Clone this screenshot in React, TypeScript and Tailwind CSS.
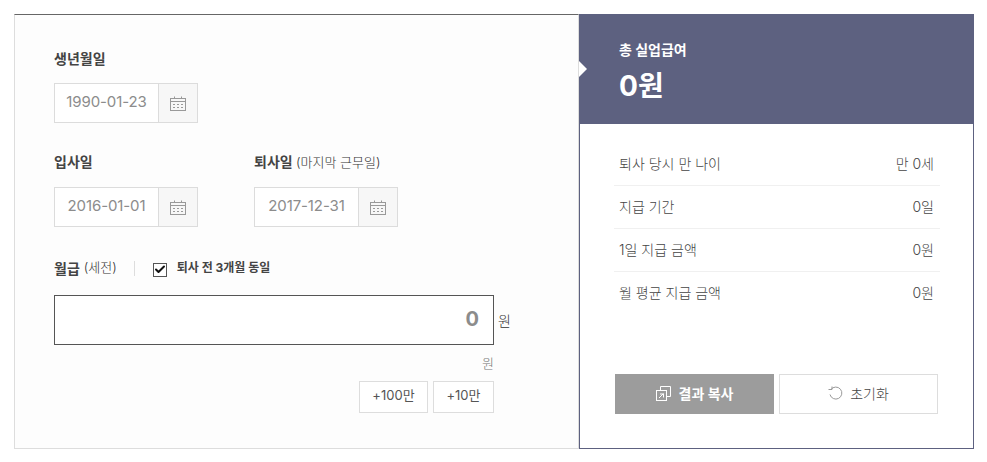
import { Check } from 'lucide-react';

const fontStack = { fontFamily: 'Inter, "Noto Sans CJK KR", "Noto Sans", sans-serif' };

function CalendarIcon() {
  return (
    <svg width="16" height="15" viewBox="0 0 16 15" fill="none" stroke="#999999" strokeWidth="1">
      <rect x="0.5" y="2.5" width="15" height="12" />
      <path d="M0.5 5.5H15.5M4.5 0.5V2.5M11.5 0.5V2.5" />
      <path d="M3 8.5H5M7 8.5H9M11 8.5H13M3 11.5H5M7 11.5H9M11 11.5H13" />
    </svg>
  );
}

function DateField({ value }: { value: string }) {
  return (
    <div className="flex h-10 w-[144px] border border-[#dcdcdc] bg-white">
      <div className="flex flex-1 items-center justify-center pb-[2px] text-[15px] tracking-[-0.1px] text-[#8c8c8c]">{value}</div>
      <div className="flex w-[39px] items-center justify-center border-l border-[#dcdcdc] bg-[#f7f7f7]">
        <CalendarIcon />
      </div>
    </div>
  );
}

function ResultRow({ label, value, last }: { label: string; value: string; last?: boolean }) {
  return (
    <div className={`flex h-[43px] items-center justify-between pb-[2px] pl-[5px] pr-[6px] text-[14px] font-light text-[#444] ${last ? '' : 'border-b border-[#f0f0f0]'}`}>
      <span>{label}</span>
      <span>{value}</span>
    </div>
  );
}

export default function App() {
  return (
    <div className="h-[462px] w-[987px] bg-white p-[14px] pr-[13px]" style={fontStack}>
      <div className="flex h-[435px] w-[960px]">
        {/* Input side */}
        <div className="flex w-[565px] flex-col border-x border-b border-t border-[#dddddd] border-t-[#666] bg-[#fdfdfd] pl-[39px] pt-[33px]">
          <div className="mb-[13px] text-[14px] leading-[22px] font-bold text-[#444]">생년월일</div>
          <DateField value="1990-01-23" />

          <div className="mt-[28px] flex gap-[56px]">
            <div>
              <div className="mb-[14px] text-[14px] leading-[22px] font-bold text-[#444]">입사일</div>
              <DateField value="2016-01-01" />
            </div>
            <div>
              <div className="mb-[14px] text-[14px] leading-[22px] font-bold text-[#444]">
                퇴사일 <span className="text-[13px] font-light text-[#333]">(마지막 근무일)</span>
              </div>
              <DateField value="2017-12-31" />
            </div>
          </div>

          <div className="mt-[30px] flex h-[22px] items-center">
            <span className="text-[14px] font-bold text-[#444]">월급</span>
            <span className="ml-1 text-[13px] font-light text-[#333]">(세전)</span>
            <div className="ml-[17px] h-[15px] w-px bg-[#dddddd]" />
            <div className="ml-[18px] mt-[3px] flex h-[14px] w-[14px] items-center justify-center border border-[#555] bg-white">
              <Check size={13} strokeWidth={4} className="text-[#111]" />
            </div>
            <span className="ml-[10px] text-[12px] font-bold text-[#444]">퇴사 전 3개월 동일</span>
          </div>

          <div className="mt-[16px] flex items-center">
            <div className="flex h-[50px] w-[440px] items-center justify-end border border-[#555] bg-white pb-[2px] pr-[14px] text-[20px] font-bold text-[#8c8c8c]">0</div>
            <span className="ml-[4px] text-[14px] font-light text-[#333]">원</span>
          </div>

          <div className="mt-[8px] w-[440px] text-right text-[13px] leading-[20px] font-light text-[#777]">원</div>

          <div className="mt-[8px] flex w-[440px] justify-end gap-[5px]">
            <button className="h-[32px] w-[69px] border border-[#dddddd] bg-white pb-[2px] text-[13px] text-[#555]">+100만</button>
            <button className="h-[32px] w-[61px] border border-[#dddddd] bg-white pb-[2px] text-[13px] text-[#555]">+10만</button>
          </div>
        </div>

        {/* Result side */}
        <div className="flex w-[395px] flex-col border-x border-b border-[#5d6180] bg-white">
          <div className="relative -mx-px h-[110px] bg-[#5d6180] pl-[40px] pt-[25px] text-white">
            <div className="absolute left-0 top-[47px] h-0 w-0 border-y-[8px] border-l-[8px] border-y-transparent border-l-white" />
            <div className="text-[14px] leading-[22px] font-bold">총 실업급여</div>
            <div className="mt-[6px] text-[28px] leading-[38px] font-bold">0원</div>
          </div>

          <div className="ml-[34px] mr-[33px] mt-[19px]">
            <ResultRow label="퇴사 당시 만 나이" value="만 0세" />
            <ResultRow label="지급 기간" value="0일" />
            <ResultRow label="1일 지급 금액" value="0원" />
            <ResultRow label="월 평균 지급 금액" value="0원" last />
          </div>

          <div className="mt-[59px] flex gap-[5px] pl-[35px]">
            <button className="flex h-[40px] w-[159px] items-center justify-center gap-[8px] bg-[#9c9c9c] pb-[2px] text-[14px] font-bold text-white">
              <svg width="15" height="15" viewBox="0 0 15 15" fill="none" stroke="#ffffff" strokeWidth="1">
                <path d="M4.5 4V0.5H14.5V10.5H11" />
                <rect x="0.5" y="4.5" width="10" height="10" />
                <path d="M3 12L7.5 7.5M4 8H7.5V11.5" />
              </svg>
              결과 복사
            </button>
            <button className="flex h-[40px] w-[159px] items-center justify-center gap-[7px] border border-[#dddddd] bg-white pb-[2px] text-[14px] font-light text-[#444]">
              <svg width="15" height="14" viewBox="0 0 15 14" fill="none" stroke="#999999" strokeWidth="1">
                <path d="M3 3.5A6 6 0 1 1 2 8.5" />
                <path d="M0.5 3.5H4V0.5" />
              </svg>
              초기화
            </button>
          </div>
        </div>
      </div>
    </div>
  );
}
